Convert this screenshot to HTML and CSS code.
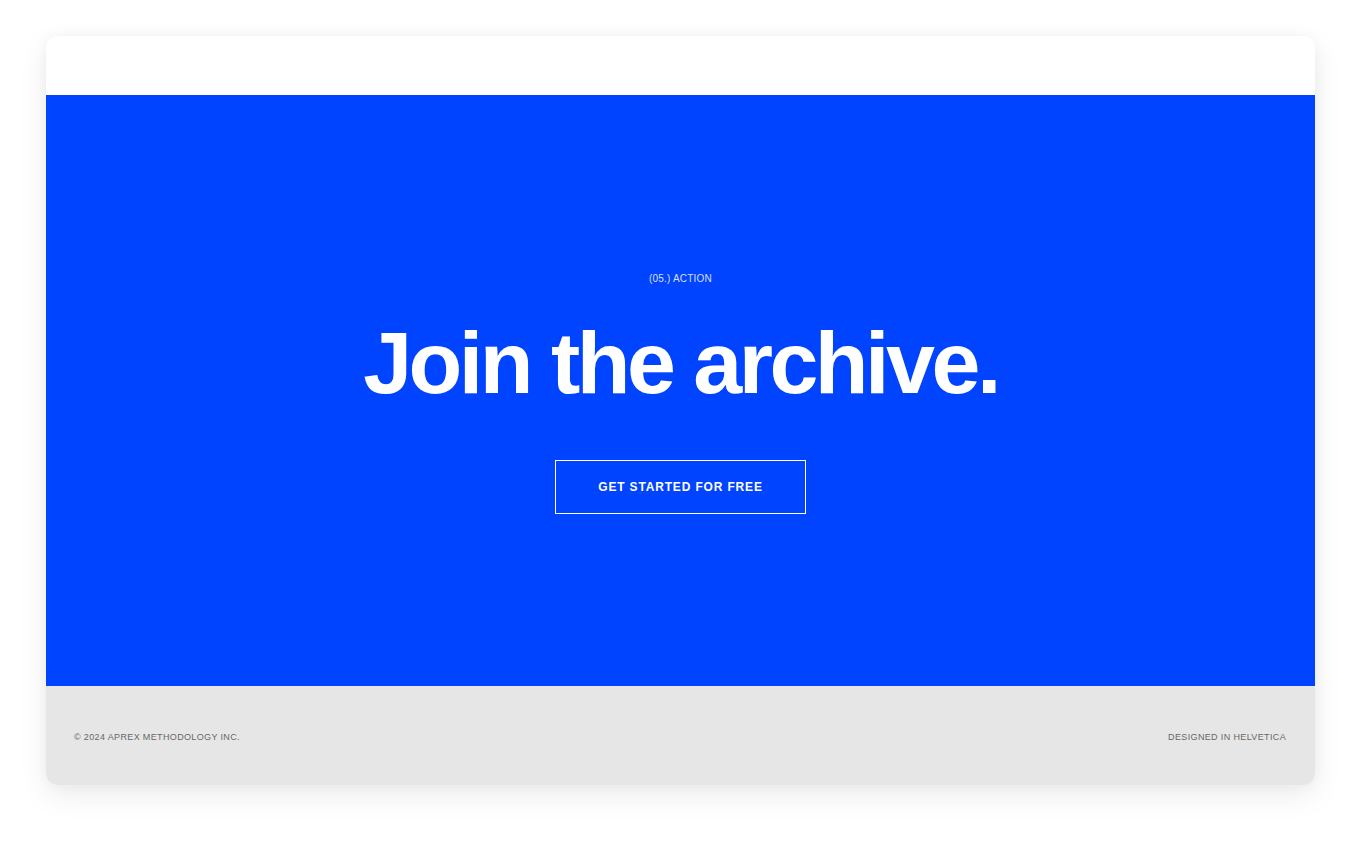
FILE: index.html
```html
<!DOCTYPE html>
<html lang="en">
<head>
<meta charset="utf-8">
<title>Join the archive</title>
<link rel="stylesheet" href="styles.css">
</head>
<body>
<div class="card">
  <header class="topbar"></header>
  <section class="action">
    <p class="label">(05.) ACTION</p>
    <h1 class="headline">Join the archive.</h1>
    <a class="cta" href="#">GET STARTED FOR FREE</a>
  </section>
  <footer class="footer">
    <span>© 2024 APREX METHODOLOGY INC.</span>
    <span>DESIGNED IN HELVETICA</span>
  </footer>
</div>
</body>
</html>
```

FILE: styles.css
```css
* { box-sizing: border-box; }
html, body { margin: 0; background: #ffffff; }
body {
  padding: 36px 46px 57px;
  font-family: "Liberation Sans", Arial, Helvetica, sans-serif;
}
.card {
  height: 749px;
  border-radius: 12px;
  overflow: hidden;
  display: flex;
  flex-direction: column;
  box-shadow: 0 10px 30px rgba(0,0,0,0.08), 0 0 14px rgba(0,0,0,0.04);
  background: #fff;
}
.topbar {
  height: 59px;
  background: #ffffff;
  flex: none;
}
.action {
  flex: none;
  height: 591px;
  background: #0044ff;
  color: #fff;
  display: flex;
  flex-direction: column;
  align-items: center;
  padding-top: 178px;
}
.label {
  margin: 0;
  font-size: 10px;
  line-height: 12px;
  letter-spacing: 0.02em;
  color: rgba(255,255,255,0.85);
}
.headline {
  margin: 28px 0 0;
  font-size: 88px;
  line-height: 100px;
  font-weight: 700;
  letter-spacing: -0.04em;
}
.cta {
  margin-top: 47px;
  display: inline-block;
  width: 251px;
  height: 54px;
  border: 1px solid #ffffff;
  color: #fff;
  text-decoration: none;
  font-size: 12px;
  font-weight: 700;
  letter-spacing: 0.07em;
  line-height: 52px;
  text-align: center;
}
.footer {
  flex: 1;
  background: #e6e6e6;
  display: flex;
  justify-content: space-between;
  align-items: center;
  padding: 2px 29px 0 28px;
  font-size: 9px;
  letter-spacing: 0.04em;
  color: #666666;
}
```
